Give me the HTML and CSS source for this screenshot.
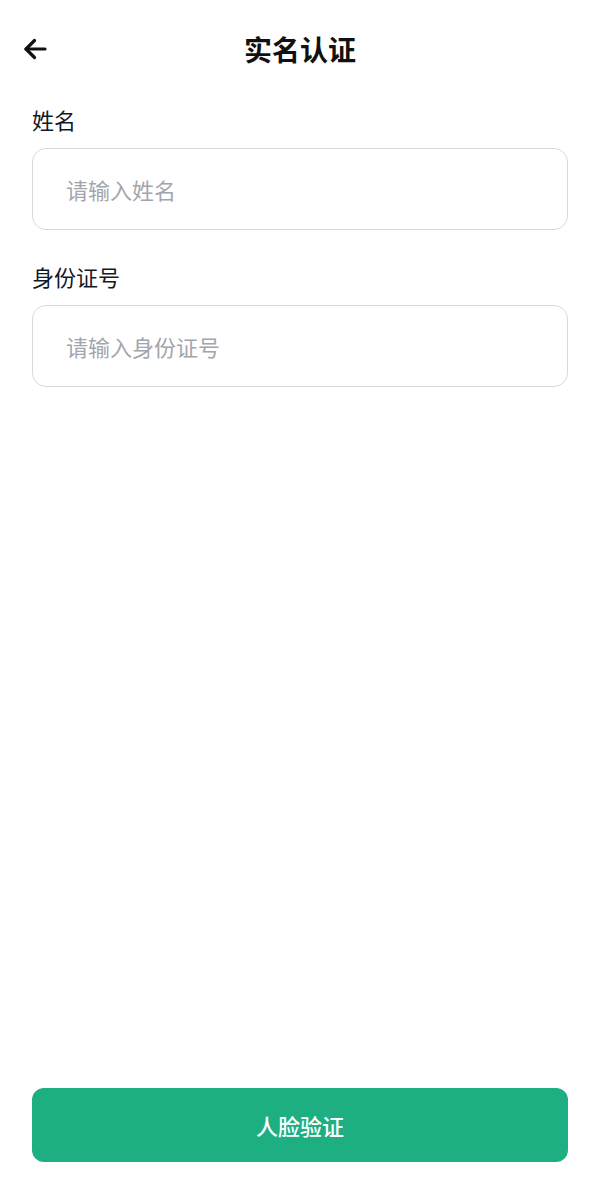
FILE: index.html
```html
<!DOCTYPE html>
<html lang="zh-CN">
<head>
<meta charset="utf-8">
<title>实名认证</title>
<link rel="stylesheet" href="styles.css">
</head>
<body>
<div class="page">
  <header class="header">
    <button class="back" aria-label="返回">
      <svg width="26" height="26" viewBox="0 0 26 26" fill="none" stroke="#111" stroke-width="3.2" stroke-linecap="round" stroke-linejoin="round">
        <line x1="22" y1="13" x2="3" y2="13"/>
        <polyline points="11.5,4.5 3,13 11.5,21.5"/>
      </svg>
    </button>
    <h1 class="title">实名认证</h1>
  </header>
  <main class="form">
    <div class="field">
      <label class="label">姓名</label>
      <div class="input"><span class="placeholder">请输入姓名</span></div>
    </div>
    <div class="field">
      <label class="label">身份证号</label>
      <div class="input"><span class="placeholder">请输入身份证号</span></div>
    </div>
  </main>
  <div class="footer">
    <button class="submit">人脸验证</button>
  </div>
</div>
</body>
</html>
```
FILE: styles.css
```css
* { box-sizing: border-box; }
html, body {
  margin: 0;
  padding: 0;
  background: #ffffff;
}
body {
  font-family: "Noto Sans CJK SC", "Noto Sans", sans-serif;
  color: #111827;
}
.page {
  min-height: 1200px;
  display: flex;
  flex-direction: column;
}
.header {
  position: relative;
  height: 98px;
  display: flex;
  align-items: center;
  justify-content: center;
}
.back {
  position: absolute;
  left: 23px;
  top: 36px;
  width: 26px;
  height: 26px;
  padding: 0;
  border: 0;
  background: none;
  display: flex;
}
.title {
  margin: 0;
  font-size: 28px;
  font-weight: 700;
  line-height: 36px;
  color: #111;
}
.form {
  padding: 6px 32px 0;
  display: flex;
  flex-direction: column;
  gap: 31px;
}
.field {
  display: flex;
  flex-direction: column;
}
.label {
  font-size: 22px;
  line-height: 30px;
  margin-bottom: 14px;
  color: #111827;
}
.input {
  height: 82px;
  border: 1.5px solid #d9d9dc;
  border-radius: 14px;
  display: flex;
  align-items: center;
  padding-left: 33px;
}
.placeholder {
  font-size: 22px;
  color: #a3a5ae;
}
.footer {
  margin-top: auto;
  padding: 0 32px 38px;
}
.submit {
  width: 100%;
  height: 74px;
  border: 0;
  border-radius: 12px;
  background: #1daf82;
  color: #ffffff;
  font-family: "Noto Sans CJK SC", "Noto Sans", sans-serif;
  font-size: 22px;
  font-weight: 500;
}
```
